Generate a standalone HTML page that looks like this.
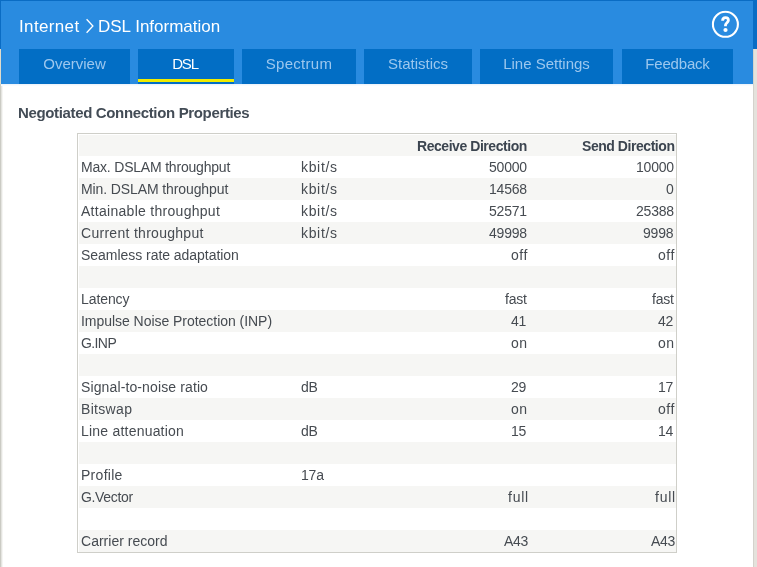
<!DOCTYPE html>
<html><head><meta charset="utf-8">
<style>
html,body{margin:0;padding:0;width:757px;height:567px;overflow:hidden;background:#fff;}
body{position:relative;font-family:"Liberation Sans",sans-serif;}
.abs{position:absolute;}
#hdr{position:absolute;left:0;top:0;width:753px;height:84px;background:#298be0;}
.tab{position:absolute;will-change:transform;top:49px;height:35px;background:#026ec5;color:#9cc7ee;font-size:15px;line-height:29px;text-align:center;}
.tab.act{color:#fff;}
.t{position:absolute;will-change:transform;white-space:nowrap;font-size:14px;color:#464b51;letter-spacing:-0.2px;}
.r{text-align:right;}
.row{position:absolute;left:79px;width:597px;height:22px;}
.g{background:#f6f6f4;}
</style></head><body>
<div id="hdr"></div>
<!-- header border lines -->
<div class="abs" style="left:0;top:0;width:757px;height:1px;background:#0a6cc4"></div>
<div class="abs" style="left:0;top:0;width:1px;height:49px;background:#0a6cc4"></div>
<div class="abs" style="left:753px;top:0;width:4px;height:49px;background:#0a6cc4"></div>
<!-- frame -->
<div class="abs" style="left:0;top:84px;width:1px;height:483px;background:#cbcbc4"></div>
<div class="abs" style="left:1px;top:84px;width:1px;height:483px;background:#e4e4e0"></div>
<div class="abs" style="left:2px;top:84px;width:1px;height:483px;background:#f5f5f3"></div>
<div class="abs" style="left:0;top:49px;width:1px;height:35px;background:#e2dccb"></div>
<div class="abs" style="left:753px;top:49px;width:4px;height:518px;background:#e4e2dc"></div>
<div class="abs" style="left:753px;top:49px;width:1px;height:518px;background:#d4d2cc"></div>

<div class="t" style="left:19px;top:17px;font-size:17px;color:#fff;letter-spacing:0.35px">Internet</div>
<svg class="abs" style="left:85px;top:17px" width="10" height="18" viewBox="0 0 10 18"><path d="M1.6 2.3 L7.9 9 L1.6 15.7" fill="none" stroke="#fff" stroke-width="1.3"/></svg>
<div class="t" style="left:98px;top:17px;font-size:17px;color:#fff;letter-spacing:0">DSL Information</div>

<svg class="abs" style="left:711px;top:10px;transform:translate(0.4px,0.3px)" width="28" height="28" viewBox="0 0 28 28">
<circle cx="14" cy="14" r="12.5" fill="none" stroke="#fff" stroke-width="2.1"/>
<path d="M11.2 10.4 C11.2 8.2 12.5 7.3 14.1 7.3 C15.8 7.3 17 8.4 17 10 C17 12.2 14.2 12.6 14.1 14.8 L14.1 16" fill="none" stroke="#fff" stroke-width="2.8"/>
<circle cx="14.1" cy="19.7" r="2.1" fill="#fff"/>
</svg>

<div class="tab" style="left:19px;width:111px">Overview</div>
<div class="tab act" style="left:138px;width:96px;letter-spacing:-1.2px;text-indent:-2px">DSL</div>
<div class="abs" style="left:138px;top:79px;width:96px;height:3px;background:#f0ec00"></div>
<div class="abs" style="left:1px;top:84px;width:752px;height:1px;background:#eef4fb"></div>
<div class="abs" style="left:1px;top:85px;width:752px;height:1px;background:#f8fbfe"></div>
<div class="tab" style="left:242px;width:114px;letter-spacing:0.3px">Spectrum</div>
<div class="tab" style="left:364px;width:108px">Statistics</div>
<div class="tab" style="left:480px;width:133px">Line Settings</div>
<div class="tab" style="left:622px;width:111px;letter-spacing:-0.2px">Feedback</div>

<div class="t" style="left:18px;top:104px;font-size:15px;font-weight:bold;color:#434c56;letter-spacing:-0.35px">Negotiated Connection Properties</div>

<!-- table -->
<div class="abs" style="left:77px;top:133px;width:598px;height:418px;border:1px solid #cfcfc9;"></div>
<div class="row g" style="top:135px;height:21px"></div>
<div class="row g" style="top:178px"></div>
<div class="row g" style="top:222px"></div>
<div class="row g" style="top:266px"></div>
<div class="row g" style="top:310px"></div>
<div class="row g" style="top:354px"></div>
<div class="row g" style="top:398px"></div>
<div class="row g" style="top:442px"></div>
<div class="row g" style="top:486px"></div>
<div class="row g" style="top:530px"></div>

<div class="t r" style="right:230px;top:138px;font-weight:bold;font-size:14px;color:#3c4550;letter-spacing:-0.45px">Receive Direction</div>
<div class="t r" style="right:83px;top:138px;font-weight:bold;font-size:14px;color:#3c4550;letter-spacing:-0.45px">Send Direction</div>

<!--ROWS-->
<div class="t" style="left:81px;top:159px;letter-spacing:-0.2px">Max. DSLAM throughput</div>
<div class="t" style="left:301px;top:159px;letter-spacing:0.66px">kbit/s</div>
<div class="t r" style="right:230.40px;top:159px;letter-spacing:-0.2px">50000</div>
<div class="t r" style="right:83.40px;top:159px;letter-spacing:-0.2px">10000</div>
<div class="t" style="left:81px;top:181px;letter-spacing:-0.105px">Min. DSLAM throughput</div>
<div class="t" style="left:301px;top:181px;letter-spacing:0.66px">kbit/s</div>
<div class="t r" style="right:230.40px;top:181px;letter-spacing:-0.2px">14568</div>
<div class="t r" style="right:83.40px;top:181px;letter-spacing:-0.2px">0</div>
<div class="t" style="left:81px;top:203px;letter-spacing:0.285px">Attainable throughput</div>
<div class="t" style="left:301px;top:203px;letter-spacing:0.66px">kbit/s</div>
<div class="t r" style="right:230.40px;top:203px;letter-spacing:-0.2px">52571</div>
<div class="t r" style="right:83.40px;top:203px;letter-spacing:-0.2px">25388</div>
<div class="t" style="left:81px;top:225px;letter-spacing:0.288px">Current throughput</div>
<div class="t" style="left:301px;top:225px;letter-spacing:0.66px">kbit/s</div>
<div class="t r" style="right:230.40px;top:225px;letter-spacing:-0.2px">49998</div>
<div class="t r" style="right:83.40px;top:225px;letter-spacing:-0.2px">9998</div>
<div class="t" style="left:81px;top:247px;letter-spacing:-0.039px">Seamless rate adaptation</div>
<div class="t r" style="right:229.70px;top:247px;letter-spacing:0.5px">off</div>
<div class="t r" style="right:82.70px;top:247px;letter-spacing:0.5px">off</div>
<div class="t" style="left:81px;top:291px;letter-spacing:-0.083px">Latency</div>
<div class="t r" style="right:230.40px;top:291px;letter-spacing:-0.2px">fast</div>
<div class="t r" style="right:83.40px;top:291px;letter-spacing:-0.2px">fast</div>
<div class="t" style="left:81px;top:313px;letter-spacing:-0.038px">Impulse Noise Protection (INP)</div>
<div class="t r" style="right:230.40px;top:313px;letter-spacing:-0.2px">41</div>
<div class="t r" style="right:83.40px;top:313px;letter-spacing:-0.2px">42</div>
<div class="t" style="left:81px;top:335px;letter-spacing:-0.6px">G.INP</div>
<div class="t r" style="right:229.70px;top:335px;letter-spacing:0.5px">on</div>
<div class="t r" style="right:82.70px;top:335px;letter-spacing:0.5px">on</div>
<div class="t" style="left:81px;top:379px;letter-spacing:0.12px">Signal-to-noise ratio</div>
<div class="t" style="left:301px;top:379px;letter-spacing:-0.2px">dB</div>
<div class="t r" style="right:230.40px;top:379px;letter-spacing:-0.2px">29</div>
<div class="t r" style="right:83.40px;top:379px;letter-spacing:-0.2px">17</div>
<div class="t" style="left:81px;top:401px;letter-spacing:0.317px">Bitswap</div>
<div class="t r" style="right:229.70px;top:401px;letter-spacing:0.5px">on</div>
<div class="t r" style="right:82.70px;top:401px;letter-spacing:0.5px">off</div>
<div class="t" style="left:81px;top:423px;letter-spacing:0.213px">Line attenuation</div>
<div class="t" style="left:301px;top:423px;letter-spacing:-0.2px">dB</div>
<div class="t r" style="right:230.40px;top:423px;letter-spacing:-0.2px">15</div>
<div class="t r" style="right:83.40px;top:423px;letter-spacing:-0.2px">14</div>
<div class="t" style="left:81px;top:467px;letter-spacing:0.283px">Profile</div>
<div class="t" style="left:301px;top:467px;letter-spacing:-0.2px">17a</div>
<div class="t" style="left:81px;top:489px;letter-spacing:-0.343px">G.Vector</div>
<div class="t r" style="right:227.95px;top:489px;letter-spacing:0.75px">full</div>
<div class="t r" style="right:80.95px;top:489px;letter-spacing:0.75px">full</div>
<div class="t" style="left:81px;top:533px;letter-spacing:0.015px">Carrier record</div>
<div class="t r" style="right:228.95px;top:533px;letter-spacing:-0.25px">A43</div>
<div class="t r" style="right:81.95px;top:533px;letter-spacing:-0.25px">A43</div>
<!--/ROWS-->
</body></html>
